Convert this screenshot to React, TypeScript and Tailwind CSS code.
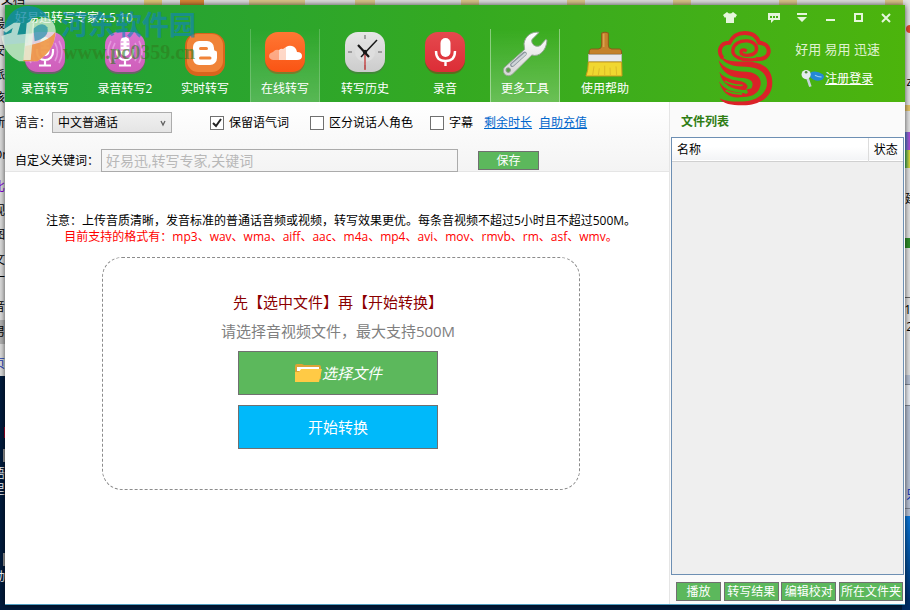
import { useState } from 'react';
import type { ReactNode } from 'react';

const leftScraps = [
  { text: '最', place: 'top-[16px]' },
  { text: '安', place: 'top-[43px]' },
  { text: '派', place: 'top-[67px]' },
  { text: '该', place: 'top-[90px]' },
  { text: '新', place: 'top-[115px]' },
  { text: 'Or', place: 'top-[147px]' },
  { text: '比', place: 'top-[179px] text-purple-700' },
  { text: '视', place: 'top-[203px]' },
  { text: '图', place: 'top-[227px]' },
  { text: '文', place: 'top-[252px]' },
  { text: '一', place: 'top-[270px]' },
  { text: '音', place: 'top-[299px]' },
  { text: '男', place: 'top-[324px]' },
  { text: '页', place: 'top-[356px] text-blue-800' },
  { text: '语', place: 'top-[466px] text-white' },
  { text: '里', place: 'top-[482px] text-white' },
  { text: '动', place: 'top-[569px] text-white' },
];

function Desktop() {
  return (
    <div aria-hidden="true" className="absolute inset-0 overflow-hidden bg-[#001b3d] text-[12px] leading-4 text-black">
      <div className="absolute left-0 top-0 h-[376px] w-full bg-[#dedede]" />
      <div className="absolute left-0 top-[320px] h-[24px] w-[5px] bg-[#b4b4b4]" />
      <div className="absolute bottom-0 right-0 top-0 w-[8px] bg-[#e4e4e4]" />
      <div className="absolute bottom-0 right-0 top-[375px] w-[8px] bg-[#b9c3d6]" />
      <div className="absolute bottom-0 right-0 top-[516px] w-[8px] bg-linear-to-b from-[#0b78dc] to-[#002a63]" />
      <div className="absolute right-0 top-[297px] h-px w-[8px] bg-[#666666]" />
      <div className="absolute right-0 top-[384px] h-[22px] w-[5px] border-y border-[#7f8795] bg-[#eceff5]" />
      <div className="absolute right-0 top-[508px] h-px w-[5px] bg-[#7f8795]" />
      <div className="absolute right-0 top-[105px] h-[6px] w-[5px] bg-[#e5c469]" />
      <div className="absolute right-0 top-[25px] h-[8px] w-[4px] rounded-l-full bg-[#e2482f]" />
      <div className="absolute right-0 top-[132px] h-[18px] w-[5px] bg-linear-to-r from-[#4a7fd0] to-[#b243d6]" />
      <div className="absolute right-0 top-[150px] h-[18px] w-[5px] bg-linear-to-r from-[#2fae5d] to-[#e6d92e]" />
      <div className="absolute right-0 top-[238px] h-[10px] w-[5px] bg-[#2f8f2a]" />
      <div className="absolute -right-[2px] top-[74px]">z</div>
      <div className="absolute -right-[7px] top-[191px]">建</div>
      <div className="absolute -right-[1px] top-[302px]">1</div>
      <div className="absolute -right-[3px] top-[319px]">2</div>
      <div className="absolute -right-[8px] top-[487px] text-blue-800">只</div>
      <div className="absolute -top-[8px] left-[1px]">文档</div>
      <div className="absolute left-[144px] top-0 h-[5px] w-[18px] bg-[#e2c878]" />
      <div className="absolute left-[180px] top-0 h-[5px] w-[24px] bg-[#d98736]" />
      <div className="absolute left-[249px] top-0 h-[5px] w-[56px] bg-[#dcc68a]" />
      <div className="absolute left-[355px] top-0 h-[5px] w-[20px] bg-[#dcc68a]" />
      <div className="absolute left-[461px] top-0 h-[5px] w-[18px] bg-[#dcc68a]" />
      <div className="absolute left-[567px] top-0 h-[5px] w-[18px] bg-[#dcc68a]" />
      <div className="absolute left-[673px] top-0 h-[5px] w-[18px] bg-[#dcc68a]" />
      <div className="absolute left-[779px] top-0 h-[5px] w-[18px] bg-[#dcc68a]" />
      <div className="absolute left-[885px] top-0 h-[5px] w-[18px] bg-[#dcc68a]" />
      {leftScraps.map((s) => (
        <div key={s.text} className={`absolute -left-[7px] ${s.place}`}>{s.text}</div>
      ))}
      <div className="absolute left-[4px] top-[427px] h-[11px] w-[1px] bg-[#b0002c]" />
      <div className="absolute left-[3px] top-[449px] h-[13px] w-[2px] bg-[#999999]" />
      <div className="absolute left-[3px] top-[553px] h-[13px] w-[2px] bg-[#999999]" />
    </div>
  );
}

function MicIcon() {
  return (
    <svg viewBox="0 0 42 44" className="h-[44px] w-[42px]">
      <defs>
        <linearGradient id="pink" x1="0" y1="0" x2="0" y2="1">
          <stop offset="0" stopColor="#d873cf" />
          <stop offset="1" stopColor="#cf5fba" />
        </linearGradient>
      </defs>
      <rect x="1" y="2" width="40" height="41" rx="13" fill="#9a3c8c" opacity=".6" />
      <rect x="1" y="1" width="40" height="40" rx="13" fill="url(#pink)" />
      <g fill="none" stroke="#f0b8ec" strokeWidth="1.6" opacity=".6">
        <path d="M11 12q-5 9 0 18M7 10q-6 11 0 22M31 12q5 9 0 18M35 10q6 11 0 22" />
      </g>
      <rect x="16.500" y="6" width="9" height="19" rx="4.500" fill="#fff" />
      <path d="M16.500 11h3M16.500 15h3M22.500 11h3M22.500 15h3M16.500 19h9" stroke="#d873cf" strokeWidth="1" />
      <path d="M13 18v3a8 8 0 0 0 16 0v-3M21 29v5M15 34.500h12" fill="none" stroke="#fff" strokeWidth="2.200" />
    </svg>
  );
}

function BloggerIcon() {
  return (
    <svg viewBox="0 0 42 46" className="h-[46px] w-[42px]">
      <rect x="1" y="2" width="40" height="43" rx="13" fill="#d9641d" />
      <rect x="3" y="3" width="36" height="38" rx="11" fill="#f08338" />
      <path d="M15 10h8a7 7 0 0 1 7 7v1q0 2 2 2 1 0 1 2v5a7 7 0 0 1-7 7H15a6 6 0 0 1-6-6V16a6 6 0 0 1 6-6z" fill="#fff" />
      <path d="M16.500 17.500h6M16.500 27h9.500" stroke="#f08338" strokeWidth="3" strokeLinecap="round" />
    </svg>
  );
}

function CloudIcon() {
  return (
    <svg viewBox="0 0 42 44" className="h-[44px] w-[42px]">
      <defs>
        <linearGradient id="orange" x1="0" y1="0" x2="0" y2="1">
          <stop offset="0" stopColor="#ff7733" />
          <stop offset="1" stopColor="#fa5414" />
        </linearGradient>
      </defs>
      <rect x="1" y="2" width="40" height="41" rx="13" fill="#a94a16" opacity=".5" />
      <rect x="1" y="1" width="40" height="40" rx="13" fill="url(#orange)" />
      <path d="M22 29V16q3-2 6-1 4 1 5 6 5 0 5 4t-5 4z" fill="#fff" />
      <path d="M22 29h-7V19q2-2 4-1l3-2z" fill="#fff" opacity=".75" />
      <path d="M15 29H9q-4-1-4-4t4-4l1-1q2-2 5-1z" fill="#fff" opacity=".45" />
    </svg>
  );
}

function ClockIcon() {
  return (
    <svg viewBox="0 0 42 44" className="h-[44px] w-[42px]">
      <defs>
        <linearGradient id="silver" x1="0" y1="0" x2="0" y2="1">
          <stop offset="0" stopColor="#e6e6e6" />
          <stop offset="1" stopColor="#cccccc" />
        </linearGradient>
      </defs>
      <rect x="1" y="2" width="40" height="41" rx="13" fill="#4d7744" opacity=".6" />
      <rect x="1" y="1" width="40" height="40" rx="13" fill="url(#silver)" />
      <circle cx="21" cy="21" r="10" fill="#dedede" />
      <path d="M21 4v4M21 34v4M4 21h4M34 21h4" stroke="#8a8a8a" strokeWidth="1.500" />
      <path d="M21 19v20" stroke="#c64a4a" strokeWidth="1.500" />
      <path d="M17 26 33 9" stroke="#181818" strokeWidth="1.500" />
      <path d="m14 14 11 12" stroke="#181818" strokeWidth="2.200" />
      <circle cx="21" cy="21" r="2.200" fill="#181818" />
    </svg>
  );
}

function RecordIcon() {
  return (
    <svg viewBox="0 0 42 44" className="h-[44px] w-[42px]">
      <defs>
        <linearGradient id="red" x1="0" y1="0" x2="0" y2="1">
          <stop offset="0" stopColor="#e5494e" />
          <stop offset="1" stopColor="#dc2d36" />
        </linearGradient>
      </defs>
      <rect x="1" y="2" width="40" height="41" rx="13" fill="#8c2a1c" opacity=".5" />
      <rect x="1" y="1" width="40" height="40" rx="13" fill="url(#red)" />
      <rect x="16.500" y="7" width="10" height="19" rx="5" fill="#fff" />
      <path d="M12 20q0 10 9.500 10T31 20M21.500 30v5" fill="none" stroke="#fff" strokeWidth="2.400" />
    </svg>
  );
}

function WrenchIcon() {
  return (
    <svg viewBox="125 94 140 138" className="h-[46px] w-[46px]">
      <defs>
        <linearGradient id="steel" x1="0" y1="0" x2="0" y2="1">
          <stop offset="0" stopColor="#ffffff" />
          <stop offset="1" stopColor="#d5d5d5" />
        </linearGradient>
      </defs>
      <path
        d="M238 97C215 94 195 108 192 132l2 17-62 55c-6 10-2 24 12 25 6 0 10-2 14-6l58-57c22 7 44-13 46-45l-4-2-16 18c-14 8-30-4-26-18z"
        fill="url(#steel)"
        stroke="#93a792"
        strokeWidth="3"
      />
      <path d="m156 196 38-34" stroke="#8c979f" strokeWidth="13" strokeLinecap="round" />
      <path d="m157 196 38-33" stroke="#cfd5d9" strokeWidth="7" strokeLinecap="round" />
      <circle cx="144" cy="212" r="7" fill="#57a345" stroke="#8d9b8d" strokeWidth="3" />
    </svg>
  );
}

function BrushIcon() {
  return (
    <svg viewBox="366 94 138 138" className="h-[46px] w-[46px]">
      <path d="M425 100q10-5 20 0v36q0 12 10 12h23q7 0 7 16H387q0-16 7-16h21q10 0 10-12z" fill="#c4822c" stroke="#8d5a1a" strokeWidth="3" />
      <path d="M431 102v40" stroke="#dba24f" strokeWidth="5" />
      <rect x="385" y="165" width="100" height="21" fill="#e9e9ee" stroke="#b7b7b7" strokeWidth="2" />
      <path d="M385 187h100l1 42H378q7-18 7-42z" fill="#f0d730" stroke="#c99a1c" strokeWidth="3" />
      <path d="m402 200-4 26M418 206l-3 20M434 198v28M450 204l1 22M468 200l2 26" stroke="#d3ae22" strokeWidth="2" />
    </svg>
  );
}

function Emblem() {
  return (
    <svg viewBox="80 82 170 231" className="h-[76px] w-[56px]">
      <g fill="none" stroke="#db2228" strokeWidth="12">
        <path d="M97 168C80 146 90 120 118 121 128 101 140 91 164 91 188 91 202 102 208 121 234 122 242 142 234 158 226 170 214 171 198 171" />
        <path d="M198 171C152 178 126 162 128 142 131 124 150 113 172 115 196 118 205 134 198 148 190 160 164 162 155 154 149 146 156 138 170 146" strokeWidth="10" />
      </g>
      <g fill="#db2228">
        <path d="M88 158C104 178 130 178 168 178 220 178 248 202 248 242 248 288 206 312 156 311 124 311 98 306 88 290 108 299 132 300 156 299 204 298 232 272 232 242 231 212 208 196 168 194 128 193 100 186 88 158z" />
        <path d="M85 174C102 202 130 207 168 209 206 211 222 236 208 262 198 280 176 288 152 284L150 276C166 278 170 276 174 272L170 262 184 260C194 244 186 230 160 228 122 228 92 212 85 174z" />
        <path d="M87 210C104 232 130 234 152 238 174 244 178 256 166 264 130 266 96 252 87 210z" />
        <path d="M86 238C100 262 124 272 164 274L174 282C130 296 98 282 86 238z" />
      </g>
      <path d="M104 238q26 14 54 12M106 266q24 12 50 10" fill="none" stroke="#47b20f" strokeWidth="5" />
    </svg>
  );
}

function KeyIcon() {
  return (
    <svg viewBox="336 200 72 58" className="h-[19px] w-[24px]">
      <path d="M362 212q18-10 40 4 8 9-2 17-22 8-36-8z" fill="#2489d6" />
      <path d="M378 219q10 6 20 5" stroke="#8fc9f1" strokeWidth="4" fill="none" />
      <path d="m354 224 10 30" stroke="#c6d4d9" strokeWidth="8" />
      <circle cx="351" cy="217" r="14" fill="#e4ecee" />
      <circle cx="351" cy="210" r="4" fill="#528b3b" />
    </svg>
  );
}

function FolderIcon() {
  return (
    <svg viewBox="0 0 28 20" className="h-[20px] w-[28px]">
      <path d="M1 3q0-2 2-2h5l2 1h15q2 0 2 2v12H1z" fill="#dca336" />
      <path d="M3 4h22v4H3z" fill="#fff" />
      <path d="M7 6h21l-3 13H1V9h4z" fill="#ffca45" />
    </svg>
  );
}

type Tab = { label: string; icon: ReactNode; look: string };

const plain = 'border-transparent';
const tabs: Tab[] = [
  { label: '录音转写', icon: <MicIcon />, look: plain },
  { label: '录音转写2', icon: <MicIcon />, look: plain },
  { label: '实时转写', icon: <BloggerIcon />, look: plain },
  { label: '在线转写', icon: <CloudIcon />, look: 'border-white/20 bg-linear-to-b from-transparent to-white/20' },
  { label: '转写历史', icon: <ClockIcon />, look: plain },
  { label: '录音', icon: <RecordIcon />, look: plain },
  { label: '更多工具', icon: <WrenchIcon />, look: 'border-white/40 bg-linear-to-b from-transparent to-white/25' },
  { label: '使用帮助', icon: <BrushIcon />, look: plain },
];

const captionButtons: { name: string; icon: ReactNode; gap: string }[] = [
  { name: '换肤', gap: 'mr-4', icon: <path d="M6 3 2 6l2 3 1-1v6h8V8l1 1 2-3-4-3q-3 3-6 0z" fill="currentColor" /> },
  { name: '反馈', gap: '', icon: <path fillRule="evenodd" d="M3 4h12v7H9l-3 3v-3H3zM5 7v2h2V7zm3 0v2h2V7zm3 0v2h2V7z" fill="currentColor" /> },
  { name: '菜单', gap: '', icon: <path d="M4 4h10v2H4zM4 8h10l-5 5z" fill="currentColor" /> },
  { name: '最小化', gap: '', icon: <path d="M5 10h9v2H5z" fill="currentColor" /> },
  { name: '最大化', gap: '', icon: <path d="M6 5h7v7H6z" fill="none" stroke="currentColor" strokeWidth="2" /> },
  { name: '关闭', gap: '', icon: <path d="m5 5 8 8m0-8-8 8" fill="none" stroke="currentColor" strokeWidth="2" /> },
];

function Header() {
  return (
    <header className="relative flex h-[97px] shrink-0 flex-col bg-linear-to-r from-[#1ea038] via-[#34a921] to-[#4cb40c] text-white">
      <div className="flex h-6 items-center justify-between pl-[10px] pr-[5px] pt-[2px]">
        <h1 className="text-[12px] leading-4">好易迅转写专家4.5.10</h1>
        <div className="flex text-[#e6f6dc]">
          {captionButtons.map((b) => (
            <button key={b.name} type="button" aria-label={b.name} className={`flex w-7 justify-center ${b.gap}`}>
              <svg viewBox="0 0 18 18" className="size-[18px]">{b.icon}</svg>
            </button>
          ))}
        </div>
      </div>
      <div className="flex flex-1 justify-between">
        <nav className="flex">
          {tabs.map((t) => (
            <button key={t.label} type="button" className={`mx-[5px] flex w-[70px] flex-col items-center justify-end border-x pb-[5px] ${t.look}`}>
              <span className="flex h-[50px] items-start">{t.icon}</span>
              <span className="whitespace-nowrap text-[12px] leading-4">{t.label}</span>
            </button>
          ))}
        </nav>
        <div className="flex pr-[25px]">
          <span className="h-[73px] pt-px"><Emblem /></span>
          <div className="ml-[22px] flex flex-col pt-3">
            <p className="whitespace-nowrap text-[13px] leading-4 text-[#e0f3d2]">好用 易用 迅速</p>
            <p className="ml-[6px] mt-3 flex items-center">
              <KeyIcon />
              <a href="#login" className="text-[12px] leading-4 underline">注册登录</a>
            </p>
          </div>
        </div>
      </div>
    </header>
  );
}

function Check({ label, initial = false }: { label: string; initial?: boolean }) {
  const [on, setOn] = useState(initial);
  return (
    <label className="flex items-center gap-[5px] whitespace-nowrap">
      <span className="grid size-[14px]">
        <input
          type="checkbox"
          checked={on}
          onChange={() => setOn(!on)}
          className="col-start-1 row-start-1 size-[14px] appearance-none border border-[#707070] bg-white"
        />
        {on && (
          <svg viewBox="0 0 14 14" className="pointer-events-none col-start-1 row-start-1 size-[14px]">
            <path d="m3 7 3 3 5-7" fill="none" stroke="#222" strokeWidth="2" />
          </svg>
        )}
      </span>
      {label}
    </label>
  );
}

function Options() {
  return (
    <div className="h-[70px] border-b border-[#e5e5e5] bg-linear-to-b from-white to-[#f4f4f4] pl-[10px] pt-[10px]">
      <div className="flex h-[21px] items-center">
        <label htmlFor="language" className="w-[37px] whitespace-nowrap">语言：</label>
        <span className="grid w-[120px] items-center">
          <select
            id="language"
            className="col-start-1 row-start-1 h-[21px] appearance-none border border-[#acacac] bg-linear-to-b from-[#f0f0f0] to-[#e5e5e5] pl-[5px] leading-4"
          >
            <option>中文普通话</option>
          </select>
          <svg viewBox="0 0 8 8" className="pointer-events-none col-start-1 row-start-1 mr-[5px] size-2 justify-self-end">
            <path d="m2 2 2 4 2-4" fill="none" stroke="#606060" strokeWidth="1.300" />
          </svg>
        </span>
        <div className="ml-[38px] flex items-center pt-px">
          <Check label="保留语气词" initial />
          <span className="w-[21px]" />
          <Check label="区分说话人角色" />
          <span className="w-[17px]" />
          <Check label="字幕" />
          <a href="#remaining" className="ml-[11px] whitespace-nowrap text-[#0066cc] underline">剩余时长</a>
          <a href="#recharge" className="ml-[7px] whitespace-nowrap text-[#0066cc] underline">自助充值</a>
        </div>
      </div>
      <div className="mt-4 flex h-[23px] items-center">
        <label htmlFor="keywords" className="w-[86px] whitespace-nowrap">自定义关键词：</label>
        <input
          id="keywords"
          placeholder="好易迅,转写专家,关键词"
          className="h-[23px] w-[357px] border border-[#ababab] bg-transparent px-[4px] text-[14px] placeholder:text-[#b8b8b8]"
        />
        <button type="button" className="ml-5 h-[19px] w-[61px] border border-[#707070] bg-[#5cb85c] leading-4 text-white">保存</button>
      </div>
    </div>
  );
}

function Workspace() {
  return (
    <main className="flex min-w-0 flex-1 flex-col border-r border-[#e5e5e5] bg-white">
      <Options />
      <div className="flex flex-col items-center pl-2 pt-[41px]">
        <p className="whitespace-nowrap leading-4">注意：上传音质清晰，发音标准的普通话音频或视频，转写效果更优。每条音视频不超过5小时且不超过500M。</p>
        <p className="whitespace-nowrap leading-4 text-[#ff0000]">目前支持的格式有：mp3、wav、wma、aiff、aac、m4a、mp4、avi、mov、rmvb、rm、asf、wmv。</p>
        <section className="mt-3 flex h-[233px] w-[478px] flex-col items-center rounded-[20px] border border-dashed border-[#8c8c8c] pr-[6px] pt-[34px] text-[15px]">
          <p className="leading-5 text-[#8b0000]">先【选中文件】再【开始转换】</p>
          <p className="mt-[9px] leading-5 text-[#808080]">请选择音视频文件，最大支持500M</p>
          <button type="button" className="mt-[10px] flex h-[44px] w-[200px] items-center justify-center border border-[#707070] bg-[#5cb85c] italic text-white">
            <FolderIcon />
            选择文件
          </button>
          <button type="button" className="mt-[10px] h-[44px] w-[200px] border border-[#707070] bg-[#00b9fa] text-white">开始转换</button>
        </section>
      </div>
    </main>
  );
}

const action = 'h-[19px] whitespace-nowrap border border-[#707070] bg-[#5cb85c] leading-4 text-white';

function FileList() {
  return (
    <aside className="flex w-[235px] shrink-0 flex-col bg-[#fafafa] pl-px">
      <h2 className="pb-[7px] pl-[10px] pt-3 font-bold leading-4 text-[#2f7d14]">文件列表</h2>
      <div className="mr-px flex-1 border border-[#6d8fb3] bg-[#efefef]">
        <table className="w-full table-fixed border-collapse">
          <thead>
            <tr className="h-[23px] border-b border-[#d0d0d0] bg-linear-to-b from-white from-40% to-[#f3f4f6]">
              <th scope="col" className="border-r border-[#dcdcdc] pb-0 pl-[5px] pt-[2px] text-left font-normal leading-4">名称</th>
              <th scope="col" className="w-[35px] pb-0 pt-[2px] text-center font-normal leading-4">状态</th>
            </tr>
          </thead>
        </table>
      </div>
      <div className="flex justify-between pb-[3px] pl-[5px] pr-[2px] pt-[7px]">
        <button type="button" className={`w-[45px] ${action}`}>播放</button>
        <button type="button" className={`w-[55px] ${action}`}>转写结果</button>
        <button type="button" className={`w-[55px] ${action}`}>编辑校对</button>
        <button type="button" className={`w-[64px] ${action}`}>所在文件夹</button>
      </div>
    </aside>
  );
}

function Watermark() {
  return (
    <div aria-hidden="true" className="pointer-events-none absolute left-0 top-0">
      <svg viewBox="0 0 180 186" className="absolute left-0 top-0 h-[62px] w-[60px]">
        <path d="M14 80C24 34 56 16 88 18 116 20 138 36 148 58 128 46 108 50 92 58L84 128 14 134Q8 104 14 80z" fill="#1389a8" opacity=".8" />
        <path d="M8 90 42 68H62L52 104 96 100 98 72Q124 44 150 58 172 74 166 108 158 156 112 184H58Q10 160 4 108L34 98 38 84 18 98z" fill="#e6f4e4" opacity=".72" />
        <path d="M100 86Q128 62 142 82 150 112 104 124z" fill="#1389a8" opacity=".65" />
        <path d="M76 138Q142 128 166 96 166 150 112 184H70z" fill="#f08a30" opacity=".8" />
        <path d="M80 70 104 58 92 180H70z" fill="#e6f4e4" opacity=".8" />
      </svg>
      <p className="absolute left-[61px] top-[10px] whitespace-nowrap text-[27px] font-bold leading-[30px] text-[#1283bd]/65">河东软件园</p>
      <p className="absolute left-[63px] top-[42px] whitespace-nowrap font-['Liberation_Serif',serif] text-[20px] font-bold leading-5 text-[#2f7d1e]/60">www.pc0359.cn</p>
    </div>
  );
}

export default function App() {
  return (
    <div className="relative flex min-h-screen flex-col px-[5px] pb-[5px] pt-[5px] font-['Open_Sans','Noto_Sans_CJK_SC',sans-serif] text-[12px] leading-4 text-black">
      <Desktop />
      <div className="relative flex flex-1 flex-col shadow-[0_0_6px_rgba(0,0,0,0.7)]">
        <Header />
        <div className="flex flex-1 border-b border-[#4f9cc0]">
          <Workspace />
          <FileList />
        </div>
      </div>
      <Watermark />
    </div>
  );
}
